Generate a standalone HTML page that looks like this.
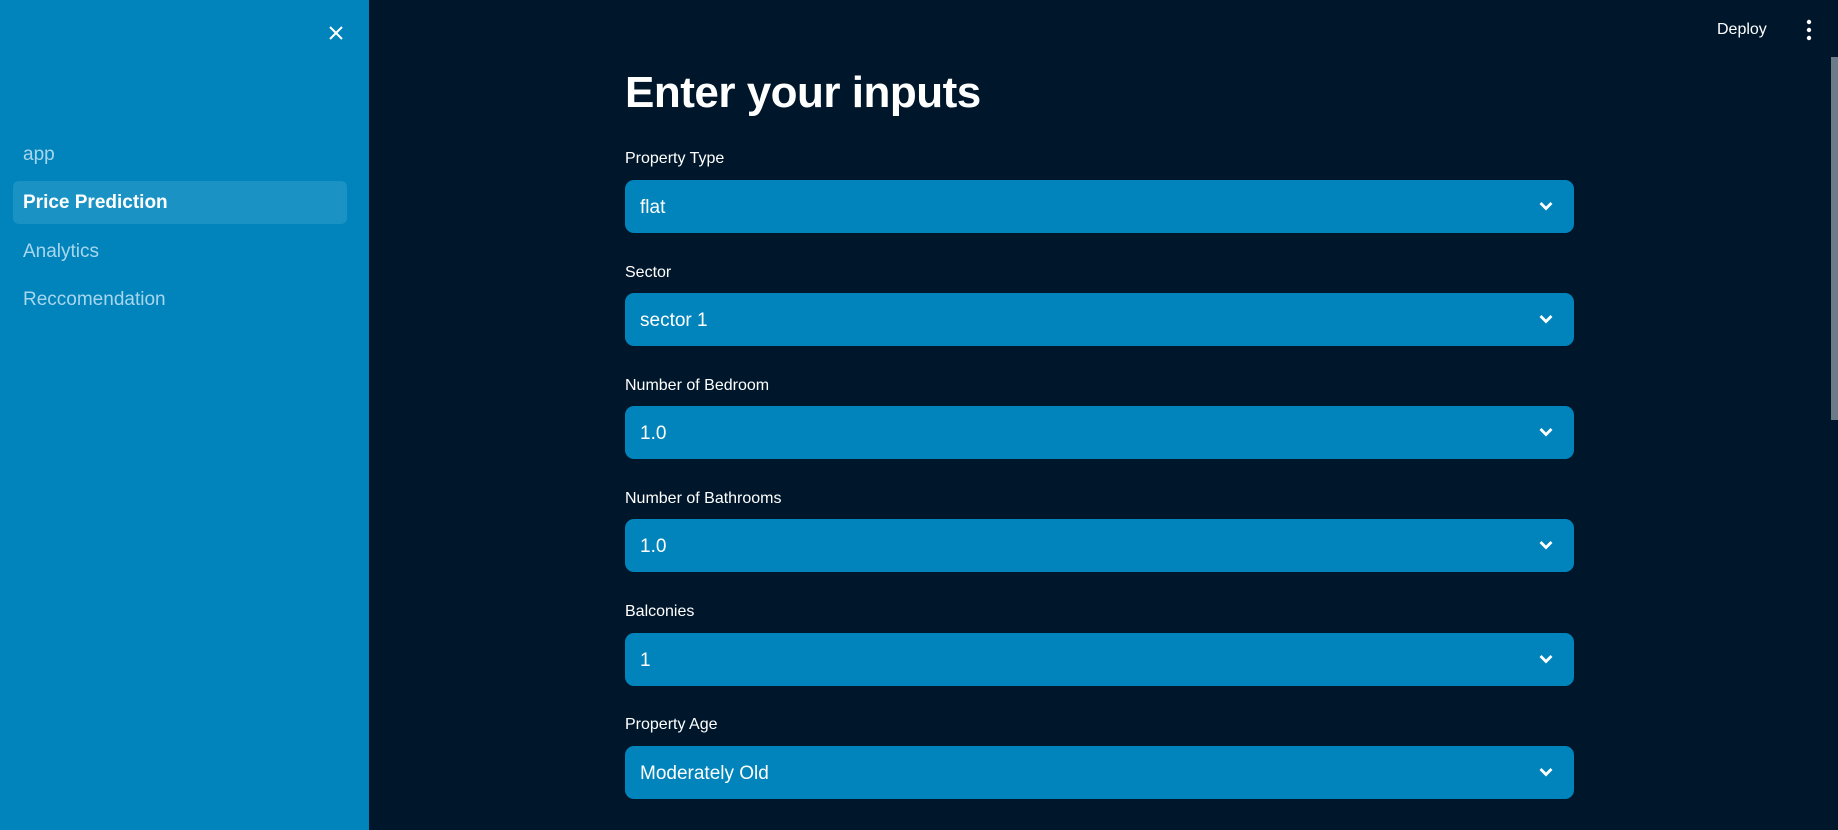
<!DOCTYPE html>
<html><head><meta charset="utf-8"><style>
*{margin:0;padding:0;box-sizing:border-box}
body{width:1838px;height:830px;overflow:hidden;background:#00172b;font-family:"Liberation Sans",sans-serif;position:relative}
.sb{position:absolute;left:0;top:0;width:369px;height:830px;background:#0084bb}
.nav{position:absolute;left:23px;font-size:19px;color:#a9d6ec;line-height:24px}
.act{position:absolute;left:13px;top:181px;width:334px;height:43px;background:#1a93c4;border-radius:6px}
.lbl{position:absolute;left:625px;font-size:16px;color:#fff;line-height:20px}
.sel{position:absolute;left:625px;width:949px;height:53px;background:#0084bb;border-radius:9px;color:#fff;font-size:19px;line-height:55px;padding-left:15px}
.sel svg{position:absolute;right:20px;top:20px}
h1{position:absolute;left:625px;top:65px;font-size:44px;color:#fff;font-weight:bold;line-height:56px;letter-spacing:-0.5px}
</style></head><body>
<div class="sb">
<svg style="position:absolute;left:328px;top:25px" width="16" height="16" viewBox="0 0 16 16"><path d="M2 2L14 14M14 2L2 14" stroke="#fff" stroke-width="2"/></svg>
<div class="nav" style="top:143px">app</div>
<div class="act"></div>
<div class="nav" style="top:191px;color:#fff;font-weight:bold">Price Prediction</div>
<div class="nav" style="top:240px">Analytics</div>
<div class="nav" style="top:288px">Reccomendation</div>
</div>
<div style="position:absolute;left:1717px;top:21px;font-size:16px;color:#fff">Deploy</div>
<svg style="position:absolute;left:1805px;top:19px" width="8" height="22" viewBox="0 0 8 22"><circle cx="4" cy="3" r="2.2" fill="#fff"/><circle cx="4" cy="11" r="2.2" fill="#fff"/><circle cx="4" cy="19" r="2.2" fill="#fff"/></svg>
<div style="position:absolute;left:1831px;top:57px;width:7px;height:363px;background:#6b7b88"></div>
<h1>Enter your inputs</h1>
<div class="lbl" style="top:149px">Property Type</div>
<div class="sel" style="top:180px">flat<svg width="16" height="12" viewBox="0 0 16 12"><path d="M2.5 3L8 8.5L13.5 3" stroke="#fff" stroke-width="2.8" fill="none"/></svg></div>
<div class="lbl" style="top:263px">Sector</div>
<div class="sel" style="top:293px">sector 1<svg width="16" height="12" viewBox="0 0 16 12"><path d="M2.5 3L8 8.5L13.5 3" stroke="#fff" stroke-width="2.8" fill="none"/></svg></div>
<div class="lbl" style="top:376px">Number of Bedroom</div>
<div class="sel" style="top:406px">1.0<svg width="16" height="12" viewBox="0 0 16 12"><path d="M2.5 3L8 8.5L13.5 3" stroke="#fff" stroke-width="2.8" fill="none"/></svg></div>
<div class="lbl" style="top:489px">Number of Bathrooms</div>
<div class="sel" style="top:519px">1.0<svg width="16" height="12" viewBox="0 0 16 12"><path d="M2.5 3L8 8.5L13.5 3" stroke="#fff" stroke-width="2.8" fill="none"/></svg></div>
<div class="lbl" style="top:602px">Balconies</div>
<div class="sel" style="top:633px">1<svg width="16" height="12" viewBox="0 0 16 12"><path d="M2.5 3L8 8.5L13.5 3" stroke="#fff" stroke-width="2.8" fill="none"/></svg></div>
<div class="lbl" style="top:715px">Property Age</div>
<div class="sel" style="top:746px">Moderately Old<svg width="16" height="12" viewBox="0 0 16 12"><path d="M2.5 3L8 8.5L13.5 3" stroke="#fff" stroke-width="2.8" fill="none"/></svg></div>
</body></html>
